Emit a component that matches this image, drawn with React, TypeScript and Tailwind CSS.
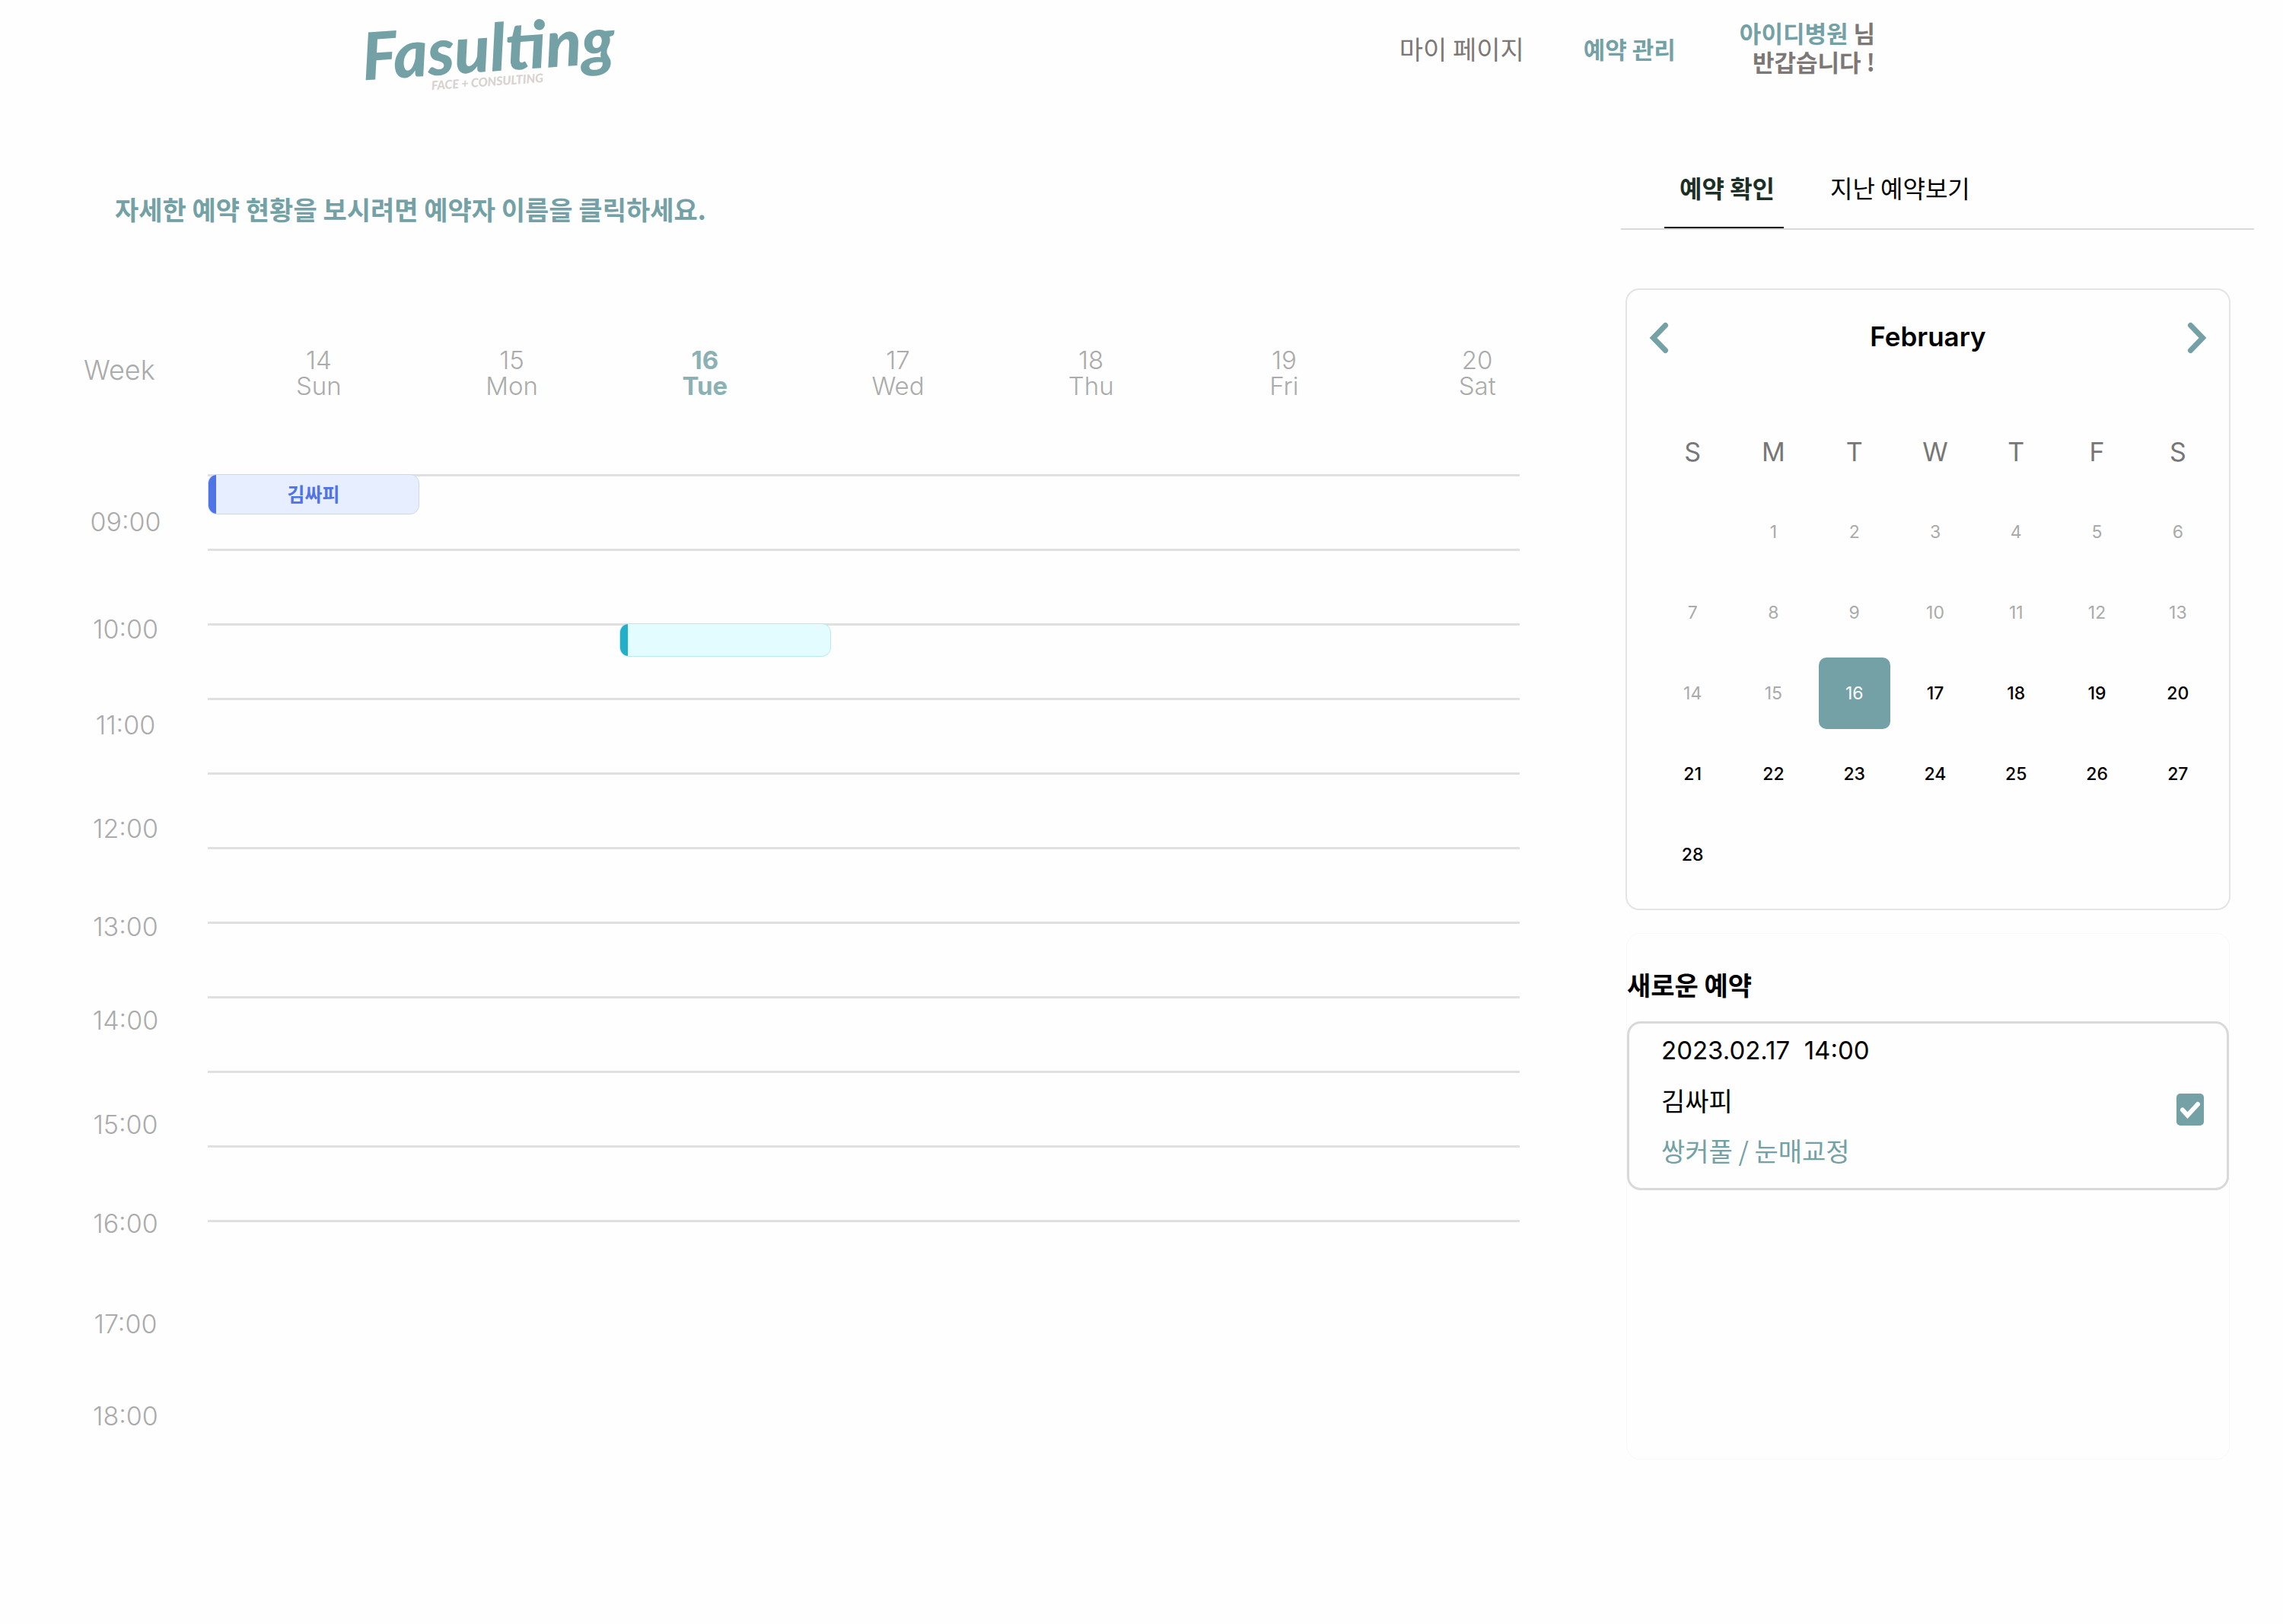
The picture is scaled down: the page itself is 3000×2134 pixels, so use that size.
import { useState } from "react";

const WEEK = [
  { date: 14, name: "Sun" },
  { date: 15, name: "Mon" },
  { date: 16, name: "Tue" },
  { date: 17, name: "Wed" },
  { date: 18, name: "Thu" },
  { date: 19, name: "Fri" },
  { date: 20, name: "Sat" },
];

const HOURS = [
  { label: "09:00", row: "h-[141px]" },
  { label: "10:00", row: "h-[126px]" },
  { label: "11:00", row: "h-[136px]" },
  { label: "12:00", row: "h-[129px]" },
  { label: "13:00", row: "h-[123px]" },
  { label: "14:00", row: "h-[137px]" },
  { label: "15:00", row: "h-[130px]" },
  { label: "16:00", row: "h-[132px]" },
  { label: "17:00", row: "h-[121px]" },
  { label: "18:00", row: "h-[34px]" },
];

const SLOTS = [0, 1, 2, 3, 4, 5, 6, 7, 8, 9, 10];
const WEEKDAYS = ["S", "M", "T", "W", "T", "F", "S"];
const MONTH: (number | null)[][] = [
  [null, 1, 2, 3, 4, 5, 6],
  [7, 8, 9, 10, 11, 12, 13],
  [14, 15, 16, 17, 18, 19, 20],
  [21, 22, 23, 24, 25, 26, 27],
  [28, null, null, null, null, null, null],
];

function Logo() {
  return (
    <a
      href="#"
      className="ml-[472px] flex w-[340px] -rotate-4 flex-col font-[Lato,sans-serif] font-black italic"
    >
      <span className="text-center text-[86px] leading-[74px] text-[#73a1a5]">Fasulting</span>
      <span className="pl-[92px] text-[16px] leading-[18px] text-[#d8d3d0]">FACE + CONSULTING</span>
    </a>
  );
}

function Header() {
  return (
    <header className="flex h-[140px] items-start">
      <div className="flex h-[140px] grow items-start pt-6">
        <Logo />
      </div>
      <nav className="flex items-start pt-10 leading-12">
        <a href="#" className="text-[34px] text-[#7d7876]">
          마이 페이지
        </a>
        <a href="#" className="ml-[78px] text-[31px] font-bold text-[#73a1a5]">
          예약 관리
        </a>
      </nav>
      <div className="mr-[536px] ml-[84px] flex flex-col items-end pt-6 text-[31px] leading-[38px] font-bold text-[#7d7876]">
        <p className="flex gap-[7px]">
          <span className="text-[#73a1a5]">아이디병원</span>
          <span>님</span>
        </p>
        <p>반갑습니다 !</p>
      </div>
    </header>
  );
}

function WeekSchedule() {
  return (
    <section className="grow">
      <h1 className="ml-[151px] pt-[110px] text-[34px] leading-[50px] font-bold text-[#73a1a5]">
        자세한 예약 현황을 보시려면 예약자 이름을 클릭하세요.
      </h1>
      <div className="mt-[156px] flex items-center font-[Inter,sans-serif] text-[33px] leading-[34px] font-light text-[#ababab]">
        <span className="w-[292px] pb-2 pl-[110px] text-[36px]">Week</span>
        <div className="-mr-[71px] grid grow grid-cols-7 text-center">
          {WEEK.map((day) => (
            <div
              key={day.date}
              className={day.date === 16 ? "font-bold text-[#8cb1b4]" : ""}
            >
              <p>{day.date}</p>
              <p>{day.name}</p>
            </div>
          ))}
        </div>
      </div>
      <div className="mt-[99px] flex">
        <ul className="w-[273px] pt-[46px] pl-[57px] font-[Inter,sans-serif] text-[34px] leading-[34px] font-light text-[#ababab]">
          {HOURS.map((hour) => (
            <li key={hour.label} className={`w-[216px] text-center ${hour.row}`}>
              {hour.label}
            </li>
          ))}
        </ul>
        <div className="grow">
          {SLOTS.map((slot) => (
            <div key={slot} className="h-[98px] border-t-3 border-[#e0e0e0]">
              {slot === 0 && (
                <button className="-mt-[3px] flex h-[53px] w-[278px] overflow-hidden rounded-[12px] border border-[#cbd8f8] bg-[#e6eeff] text-[25px] font-bold text-[#5073e5]">
                  <span className="h-full w-2.5 bg-[#5073e5]" />
                  <span className="grow self-center pr-2.5 pb-1 leading-9">김싸피</span>
                </button>
              )}
              {slot === 2 && (
                <button
                  aria-label="예약"
                  className="-mt-[3px] ml-[541px] flex h-11 w-[278px] overflow-hidden rounded-[12px] border border-[#b9e9ef] bg-[#e3fcff]"
                >
                  <span className="h-full w-2.5 bg-[#23afc8]" />
                </button>
              )}
            </div>
          ))}
        </div>
      </div>
    </section>
  );
}

function Chevron({ next }: { next?: boolean }) {
  return (
    <svg viewBox="0 0 26 42" className="h-[42px] w-[26px]" fill="none" stroke="#73a1a5" strokeWidth="7">
      <path d={next ? "M4.5 4.5 20.5 21 4.5 37.5" : "M21.5 4.5 5.5 21 21.5 37.5"} strokeLinecap="round" />
    </svg>
  );
}

function MonthCalendar() {
  return (
    <div className="mt-[77px] mr-[31px] ml-1.5 h-[817px] rounded-[18px] border-2 border-[#e4e4e4] font-[Inter,sans-serif]">
      <div className="flex items-center justify-between px-[29px] pt-[42px]">
        <button aria-label="Previous month">
          <Chevron />
        </button>
        <h2 className="pb-1 text-[35px] leading-9 font-semibold text-black">February</h2>
        <button aria-label="Next month">
          <Chevron next />
        </button>
      </div>
      <div className="mt-[75px] pr-[14px] pl-[33px]">
        <table className="w-full table-fixed text-center">
          <thead>
            <tr className="h-[106px] text-[34px] text-[#777]">
              {WEEKDAYS.map((name, i) => (
                <th key={i} className="font-normal">
                  {name}
                </th>
              ))}
            </tr>
          </thead>
          <tbody className="text-[23px]">
            {MONTH.map((row, r) => (
              <tr key={r} className="h-[106px]">
                {row.map((day, c) => (
                  <td key={c} className="p-0">
                    {day !== null && (
                      <button
                        className={
                          day === 16
                            ? "size-[94px] rounded-[10px] bg-[#73a1a5] text-white"
                            : day < 16
                              ? "size-[94px] text-[#aaa]"
                              : "size-[94px] font-medium text-black"
                        }
                      >
                        {day}
                      </button>
                    )}
                  </td>
                ))}
              </tr>
            ))}
          </tbody>
        </table>
      </div>
    </div>
  );
}

function NewReservations() {
  const [confirmed, setConfirmed] = useState(true);
  return (
    <section className="mt-[30px] mr-[32px] ml-[7px] h-[692px] rounded-[18px] border border-[#f9f9f9]">
      <h2 className="pt-[42px] text-[34px] leading-[50px] font-bold text-black">새로운 예약</h2>
      <div className="mt-[23px] flex h-[222px] items-center justify-between rounded-[18px] border-[3px] border-[#d9d9d9] pr-[30px] pl-[42px]">
        <div className="pb-[14px] text-[34px] leading-[66px] text-black">
          <p className="font-[Inter,sans-serif] text-[33px] whitespace-pre">{"2023.02.17  14:00"}</p>
          <p>김싸피</p>
          <p className="text-[#73a1a5]">쌍커풀 / 눈매교정</p>
        </div>
        <label className="relative mt-2.5 h-[42px] w-9">
          <input
            type="checkbox"
            aria-label="예약 승인"
            checked={confirmed}
            onChange={() => setConfirmed(!confirmed)}
            className="block h-[42px] w-9 appearance-none rounded-[5px] border-2 border-[#73a1a5] checked:bg-[#73a1a5]"
          />
          {confirmed && (
            <svg
              viewBox="0 0 36 42"
              className="pointer-events-none absolute inset-0 h-[42px] w-9"
              fill="none"
              stroke="white"
              strokeWidth="6"
              strokeLinecap="round"
            >
              <path d="M8 21.5 14.5 28.5 28 14" />
            </svg>
          )}
        </label>
      </div>
    </section>
  );
}

function Sidebar() {
  return (
    <aside className="mr-[38px] ml-[133px] w-[832px] shrink-0">
      <div role="tablist" className="flex border-b-2 border-[#dadada] pt-[74px] pl-[57px] text-[32px]">
        <button role="tab" aria-selected="true" className="h-[86px] w-[157px] border-b-2 border-black pt-2 pb-[30px] pl-2 leading-12 font-bold text-[#1c2f26]">
          예약 확인
        </button>
        <button role="tab" aria-selected="false" className="ml-[61px] h-[86px] border-b-2 border-transparent pt-2 pb-[30px] leading-12 text-black">
          지난 예약보기
        </button>
      </div>
      <MonthCalendar />
      <NewReservations />
    </aside>
  );
}

export default function App() {
  return (
    <div className="min-h-screen bg-[#fefefe] font-['Noto_Sans_CJK_KR',sans-serif]">
      <Header />
      <main className="flex">
        <WeekSchedule />
        <Sidebar />
      </main>
    </div>
  );
}
